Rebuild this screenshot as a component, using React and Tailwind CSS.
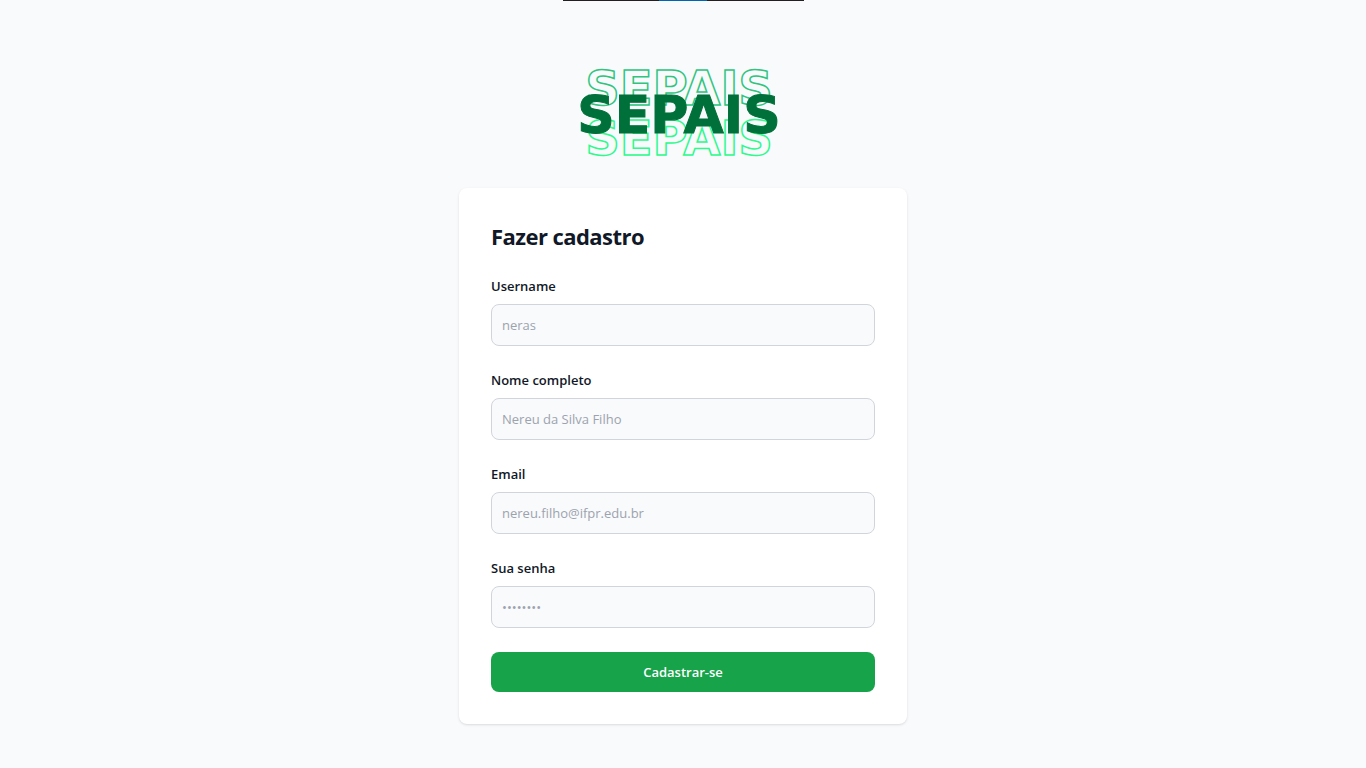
const fields = [
  { id: 'username', label: 'Username', type: 'text', placeholder: 'neras' },
  { id: 'name', label: 'Nome completo', type: 'text', placeholder: 'Nereu da Silva Filho' },
  { id: 'email', label: 'Email', type: 'email', placeholder: 'nereu.filho@ifpr.edu.br' },
  { id: 'password', label: 'Sua senha', type: 'password', placeholder: '••••••••' },
];

function Logo() {
  return (
    <svg
      viewBox="0 0 240 127"
      className="mb-4 h-[127px] w-60 font-['DejaVu_Sans'] font-bold"
      textAnchor="middle"
      role="img"
      aria-label="SEPAIS"
    >
      <g fontSize="48" fill="none" strokeWidth="1.5">
        <text x="116" y="60" stroke="#2fc57f">SEPAIS</text>
        <text x="116" y="110" stroke="#2dfb8d">SEPAIS</text>
      </g>
      <text x="116" y="88" fontSize="52" fill="#00703a" stroke="#00703a" strokeWidth="1">
        SEPAIS
      </text>
    </svg>
  );
}

function Field({ id, label, type, placeholder }) {
  return (
    <div>
      <label htmlFor={id} className="mb-2 block text-[13px] leading-5 font-semibold text-[#111827]">
        {label}
      </label>
      <input
        id={id}
        name={id}
        type={type}
        placeholder={placeholder}
        className="block w-full rounded-lg border border-[#d1d5db] bg-[#f9fafb] p-2.5 text-[13px] leading-5 text-[#111827] placeholder:text-[#9ca3af]"
      />
    </div>
  );
}

export default function App() {
  return (
    <div className="flex min-h-screen flex-col bg-[#f9fafb] font-['Open_Sans','Noto_Sans',sans-serif]">
      <div className="mx-auto flex h-px w-[241px] justify-center bg-[#231f20]">
        <div className="w-12 bg-[#0066b3]" />
      </div>
      <main className="flex grow flex-col items-center justify-center">
        <Logo />
        <section className="w-full max-w-md rounded-lg bg-white p-8 shadow-sm">
          <form className="space-y-6" onSubmit={(event) => event.preventDefault()}>
            <h1 className="text-[22px] leading-8 font-bold tracking-tight text-[#111827]">Fazer cadastro</h1>
            {fields.map((field) => (
              <Field key={field.id} {...field} />
            ))}
            <button
              type="submit"
              className="block w-full rounded-lg bg-[#16a34a] px-5 py-2.5 text-center text-[13px] leading-5 font-semibold text-white"
            >
              Cadastrar-se
            </button>
          </form>
        </section>
      </main>
    </div>
  );
}
